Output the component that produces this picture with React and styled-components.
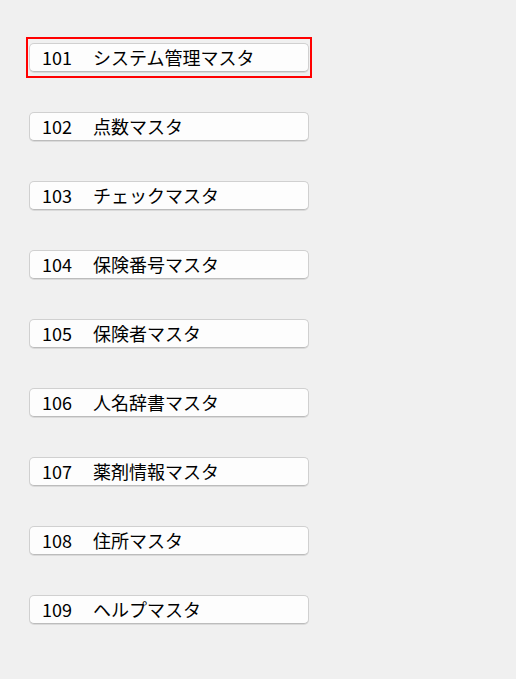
import React from 'react'
import styled, { createGlobalStyle } from 'styled-components'

const GlobalStyle = createGlobalStyle`
    html, body {
        margin: 0;
        padding: 0;
        background: #f0f0f0;
    }
`;

const MenuList = styled.div`
    display: flex;
    flex-direction: column;
    align-items: flex-start;
    gap: 28px;
    padding: 37px 0 0 26px;
    min-height: 679px;
    box-sizing: border-box;
`;

const MenuSlot = styled.div`
    border: 2px solid ${props => (props.selected ? '#ff0000' : 'transparent')};
    padding: 4px 1px;
`;

const MenuButton = styled.button`
    display: flex;
    align-items: center;
    width: 280px;
    height: 29px;
    margin: 0;
    padding: 0 0 2px 12px;
    box-sizing: border-box;
    background: #fdfdfd;
    border: 1px solid #d0d0d0;
    border-bottom-color: #bcbcbc;
    border-radius: 5px;
    box-shadow: 0 1px 0 #dadada;
    font-family: "Noto Sans CJK JP", "Noto Sans", sans-serif;
    font-size: 18px;
    color: #000;
    cursor: pointer;
    text-align: left;
`;

const Code = styled.span`
    display: inline-block;
    width: 51px;
`;

const Label = styled.span`
    white-space: nowrap;
`;

const masters = [
    { code: '101', name: 'システム管理マスタ' },
    { code: '102', name: '点数マスタ' },
    { code: '103', name: 'チェックマスタ' },
    { code: '104', name: '保険番号マスタ' },
    { code: '105', name: '保険者マスタ' },
    { code: '106', name: '人名辞書マスタ' },
    { code: '107', name: '薬剤情報マスタ' },
    { code: '108', name: '住所マスタ' },
    { code: '109', name: 'ヘルプマスタ' },
];

const App = () => (
    <>
        <GlobalStyle />
        <MenuList>
            {masters.map((m, i) => (
                <MenuSlot key={m.code} selected={i === 0}>
                    <MenuButton>
                        <Code>{m.code}</Code>
                        <Label>{m.name}</Label>
                    </MenuButton>
                </MenuSlot>
            ))}
        </MenuList>
    </>
)

export default App
